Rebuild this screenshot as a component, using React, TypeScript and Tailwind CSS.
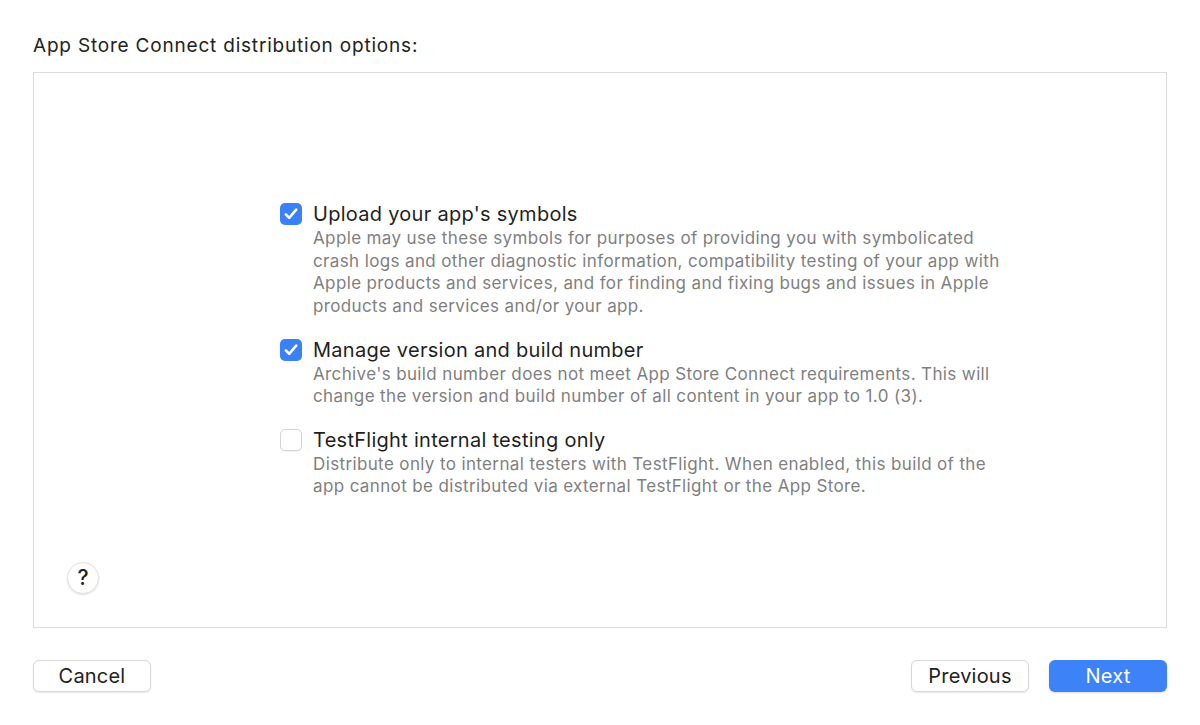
const options = [
  {
    checked: true,
    title: "Upload your app's symbols",
    lines: [
      "Apple may use these symbols for purposes of providing you with symbolicated",
      "crash logs and other diagnostic information, compatibility testing of your app with",
      "Apple products and services, and for finding and fixing bugs and issues in Apple",
      "products and services and/or your app.",
    ],
  },
  {
    checked: true,
    title: "Manage version and build number",
    lines: [
      "Archive's build number does not meet App Store Connect requirements. This will",
      "change the version and build number of all content in your app to 1.0 (3).",
    ],
  },
  {
    checked: false,
    title: "TestFlight internal testing only",
    lines: [
      "Distribute only to internal testers with TestFlight. When enabled, this build of the",
      "app cannot be distributed via external TestFlight or the App Store.",
    ],
  },
];

function Checkbox({ checked }: { checked: boolean }) {
  if (checked) {
    return (
      <span className="flex items-center justify-center w-[22px] h-[22px] rounded-[5px] bg-[#3a80f6] shrink-0">
        <svg width="16" height="16" viewBox="0 0 16 16" fill="none">
          <path d="M2.8 8.4 L6.2 11.8 L13.2 3.6" stroke="white" strokeWidth="2.6" strokeLinecap="round" strokeLinejoin="round" />
        </svg>
      </span>
    );
  }
  return (
    <span className="block w-[22px] h-[22px] rounded-[5px] bg-white border border-[#d4d4d4] shadow-[0_1px_1px_rgba(0,0,0,0.06)] shrink-0" />
  );
}

function Option({ checked, title, lines }: { checked: boolean; title: string; lines: string[] }) {
  return (
    <div className="flex gap-[11px]">
      <div className="pt-px">
        <Checkbox checked={checked} />
      </div>
      <div>
        <div className="text-[20px] leading-[24px] text-[#1f1f1f] tracking-[0.28px]">{title}</div>
        <div className="mt-px text-[17px] leading-[22.6px] text-[#7f7f7f] tracking-[0.37px]">
          {lines.map((l) => (
            <div key={l}>{l}</div>
          ))}
        </div>
      </div>
    </div>
  );
}

export default function App() {
  return (
    <div
      className="w-[1200px] h-[725px] bg-white px-[33px] pt-[32px] flex flex-col"
      style={{ fontFamily: "Inter, 'Noto Sans', sans-serif" }}
    >
      <h1 className="text-[19px] leading-[28px] text-[#222] h-[40px] tracking-[0.8px]">
        App Store Connect distribution options:
      </h1>

      <div className="h-[556px] border border-[#dcdcdc] p-[33px] flex flex-col">
        <div className="h-8" />
        <div className="flex-1 flex flex-col justify-center pl-[213px] gap-[20px]">
          {options.map((o) => (
            <Option key={o.title} {...o} />
          ))}
        </div>
        <div className="h-8 flex">
          <button className="w-8 h-8 rounded-full bg-white border border-[#e2e2e2] shadow-[0_1px_2px_rgba(0,0,0,0.12)] text-[21px] font-medium text-[#1f1f1f] flex items-center justify-center">
            ?
          </button>
        </div>
      </div>

      <div className="mt-[32px] flex items-center">
        <button className="w-[118px] h-[32px] rounded-[6px] bg-white border border-[#d8d8d8] shadow-[0_1px_2px_rgba(0,0,0,0.1)] text-[20px] text-[#222] tracking-[0.2px]">
          Cancel
        </button>
        <div className="flex-1" />
        <button className="w-[118px] h-[32px] rounded-[6px] bg-white border border-[#d8d8d8] shadow-[0_1px_2px_rgba(0,0,0,0.1)] text-[20px] text-[#222] tracking-[0.2px]">
          Previous
        </button>
        <button className="ml-[20px] w-[118px] h-[32px] rounded-[6px] bg-[#3d83f7] shadow-[0_1px_2px_rgba(0,0,0,0.15)] text-[20px] text-white tracking-[0.2px]">
          Next
        </button>
      </div>
    </div>
  );
}
